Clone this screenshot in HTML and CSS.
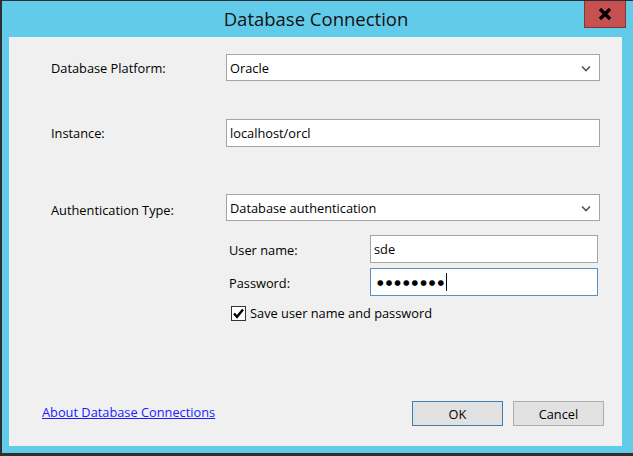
FILE: index.html
```html
<!DOCTYPE html>
<html>
<head>
<meta charset="utf-8">
<link rel="stylesheet" href="styles.css">
</head>
<body>
<div class="window">
  <div class="titlebar">
    <div class="title">Database Connection</div>
    <div class="close">
      <svg width="16" height="14" viewBox="0 0 16 14"><path d="M3 2 L13 12 M13 2 L3 12" stroke="#000" stroke-width="3.4" stroke-linecap="butt"/></svg>
    </div>
  </div>
  <div class="panel">
    <div class="form">
      <div class="row r1">
        <div class="label">Database Platform:</div>
        <div class="combo"><span>Oracle</span>
          <svg class="chev" width="10" height="7" viewBox="0 0 10 7"><path d="M1 1.5 L5 5.5 L9 1.5" fill="none" stroke="#555" stroke-width="1.6"/></svg>
        </div>
      </div>
      <div class="row r2">
        <div class="label">Instance:</div>
        <div class="textbox tall"><span>localhost/orcl</span></div>
      </div>
      <div class="row r3">
        <div class="label lower">Authentication Type:</div>
        <div class="combo"><span>Database authentication</span>
          <svg class="chev" width="10" height="7" viewBox="0 0 10 7"><path d="M1 1.5 L5 5.5 L9 1.5" fill="none" stroke="#555" stroke-width="1.6"/></svg>
        </div>
      </div>
      <div class="auth">
        <div class="subrow s1">
          <div class="sublabel">User name:</div>
          <div class="textbox small"><span>sde</span></div>
        </div>
        <div class="subrow s2">
          <div class="sublabel">Password:</div>
          <div class="textbox small focus"><span class="dots">●●●●●●●●</span><span class="caret"></span></div>
        </div>
        <div class="check">
          <div class="box">
            <svg width="13" height="13" viewBox="0 0 13 13"><path d="M2 6.5 L5 9.8 L11 2.5" fill="none" stroke="#000" stroke-width="2.4"/></svg>
          </div>
          <span>Save user name and password</span>
        </div>
      </div>
    </div>
    <div class="footer">
      <a class="link" href="#">About Database Connections</a>
      <div class="buttons">
        <div class="btn default">OK</div>
        <div class="btn">Cancel</div>
      </div>
    </div>
  </div>
</div>
</body>
</html>
```
FILE: styles.css
```css
html, body {
  margin: 0;
  padding: 0;
  background: #ffffff;
}
body {
  font-family: "Open Sans", "Noto Sans", sans-serif;
  font-size: 12.8px;
  color: #000;
}
.window {
  width: 633px;
  height: 456px;
  box-sizing: border-box;
  background: #63cbea;
  border-left: 2px solid #2e2e2e;
  border-top: 1px solid #2e2e2e;
  border-bottom: 3px solid #2e2e2e;
  padding: 0 11px 7px 7px;
  display: flex;
  flex-direction: column;
}
.titlebar {
  height: 36px;
  display: grid;
  grid-template-columns: 1fr auto 1fr;
  margin-left: -7px;
  margin-right: -11px;
  padding-right: 7px;
}
.title {
  grid-column: 2;
  font-size: 18.5px;
  line-height: 22px;
  padding-top: 7px;
  color: #111;
  margin-left: 4px;
}
.close {
  grid-column: 3;
  justify-self: end;
  align-self: start;
  width: 42px;
  height: 27px;
  box-sizing: border-box;
  background: #c75050;
  border: 1px solid #7a3a38;
  border-top: none;
  display: flex;
  align-items: center;
  justify-content: center;
}
.panel {
  flex: 1;
  background: #f0f0f0;
  display: flex;
  flex-direction: column;
  justify-content: space-between;
}
.form {
  padding: 17px 22px 0 42px;
  display: flex;
  flex-direction: column;
}
.row {
  display: flex;
  align-items: center;
}
.r2 { margin-top: 38px; }
.r3 { margin-top: 47px; }
.label {
  width: 175px;
  flex: none;
}
.lower { padding-top: 5px; }
.combo, .textbox {
  flex: 1;
  box-sizing: border-box;
  background: #fff;
  border: 1px solid #a5a5a5;
  display: flex;
  align-items: center;
  padding: 0 4px 0 3px;
}
.combo {
  height: 27px;
  justify-content: space-between;
  padding-right: 8px;
}
.chev { margin-top: 1px; }
.textbox.tall { height: 28px; }
.auth {
  padding-left: 178px;
  padding-right: 2px;
  margin-top: 14px;
  display: flex;
  flex-direction: column;
}
.subrow {
  display: flex;
  align-items: center;
}
.s2 { margin-top: 5px; }
.sublabel {
  width: 141px;
  flex: none;
  padding-top: 2px;
}
.textbox.small { height: 28px; }
.textbox.focus { border-color: #5a8fc4; }
.dots {
  font-family: "DejaVu Sans", sans-serif;
  font-size: 7.5px;
  letter-spacing: 2.1px;
  margin-left: 3px;
  margin-top: 1px;
}
.caret {
  display: inline-block;
  width: 1px;
  height: 18px;
  background: #000;
  margin-left: 0px;
}
.check {
  margin-top: 8px;
  display: flex;
  align-items: center;
  padding-left: 2px;
}
.box {
  width: 15px;
  height: 15px;
  box-sizing: border-box;
  border: 1px solid #333;
  background: #fff;
  display: flex;
  align-items: center;
  justify-content: center;
  margin-right: 4px;
}
.footer {
  display: flex;
  justify-content: space-between;
  align-items: center;
  padding: 0 18px 20px 33px;
}
.link {
  color: #1a1aff;
  text-decoration: underline;
  margin-top: -3px;
}
.buttons {
  display: flex;
  gap: 10px;
}
.btn {
  width: 91px;
  height: 25px;
  box-sizing: border-box;
  background: #e1e1e1;
  border: 1px solid #adadad;
  display: flex;
  align-items: center;
  justify-content: center;
}
.btn.default {
  border-color: #3c7fb1;
}
```
